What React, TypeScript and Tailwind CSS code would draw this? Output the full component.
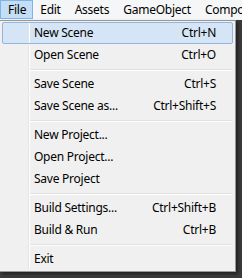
import React from 'react';

type Entry = { label: string; shortcut?: string; active?: boolean } | 'sep';

const topMenus = ['File', 'Edit', 'Assets', 'GameObject', 'Component'];

const entries: Entry[] = [
  { label: 'New Scene', shortcut: 'Ctrl+N', active: true },
  { label: 'Open Scene', shortcut: 'Ctrl+O' },
  'sep',
  { label: 'Save Scene', shortcut: 'Ctrl+S' },
  { label: 'Save Scene as...', shortcut: 'Ctrl+Shift+S' },
  'sep',
  { label: 'New Project...' },
  { label: 'Open Project...' },
  { label: 'Save Project' },
  'sep',
  { label: 'Build Settings...', shortcut: 'Ctrl+Shift+B' },
  { label: 'Build & Run', shortcut: 'Ctrl+B' },
  'sep',
  { label: 'Exit' },
];

function Gutter() {
  return (
    <div className="flex h-full shrink-0">
      <div className="w-[26px] border-r border-[#e2e3e3]" />
      <div className="w-px bg-white" />
    </div>
  );
}

export default function App() {
  return (
    <div
      className="relative h-[278px] w-[242px] overflow-hidden bg-[#3a3a3a] text-[12px] tracking-[-0.25px] text-black"
      style={{ fontFamily: '"Noto Sans", "Open Sans", sans-serif' }}
    >
      {/* menu bar */}
      <div className="flex h-[20px] items-start overflow-hidden bg-[#f5f6f7] whitespace-nowrap">
        {topMenus.map((m, i) => (
          <div
            key={m}
            className={`flex h-[19px] shrink-0 items-center px-[7px] leading-none ${
              i === 0 ? 'min-w-[32px] border border-[#7eb4ea] bg-[#c4def5] pl-[7px] pr-[6px]' : ''
            }`}
          >
            {m}
          </div>
        ))}
      </div>

      {/* dropdown */}
      <div className="absolute left-0 top-[20px] w-[236px] border-r border-b border-t border-[#979797] bg-[#f0f0f0] px-[2px] py-[1px] shadow-[2px_2px_3px_rgba(0,0,0,0.45)]">
        {entries.map((e, i) =>
          e === 'sep' ? (
            <div key={i} className="flex h-[7px] border-x border-transparent">
              <Gutter />
              <div className="flex flex-1 flex-col pt-[3px]">
                <div className="h-px bg-[#e0e0e0]" />
                <div className="h-px bg-white" />
              </div>
            </div>
          ) : (
            <div
              key={i}
              className={`flex h-[22px] items-stretch rounded-[2px] border ${
                e.active ? 'border-[#93b5de] bg-[#d6e5f5]' : 'border-transparent'
              }`}
            >
              <Gutter />
              <div className="flex flex-1 items-center justify-between pl-[4px] pr-[16px] leading-none whitespace-nowrap">
                <span>{e.label}</span>
                {e.shortcut && <span>{e.shortcut}</span>}
              </div>
            </div>
          )
        )}
      </div>
    </div>
  );
}
